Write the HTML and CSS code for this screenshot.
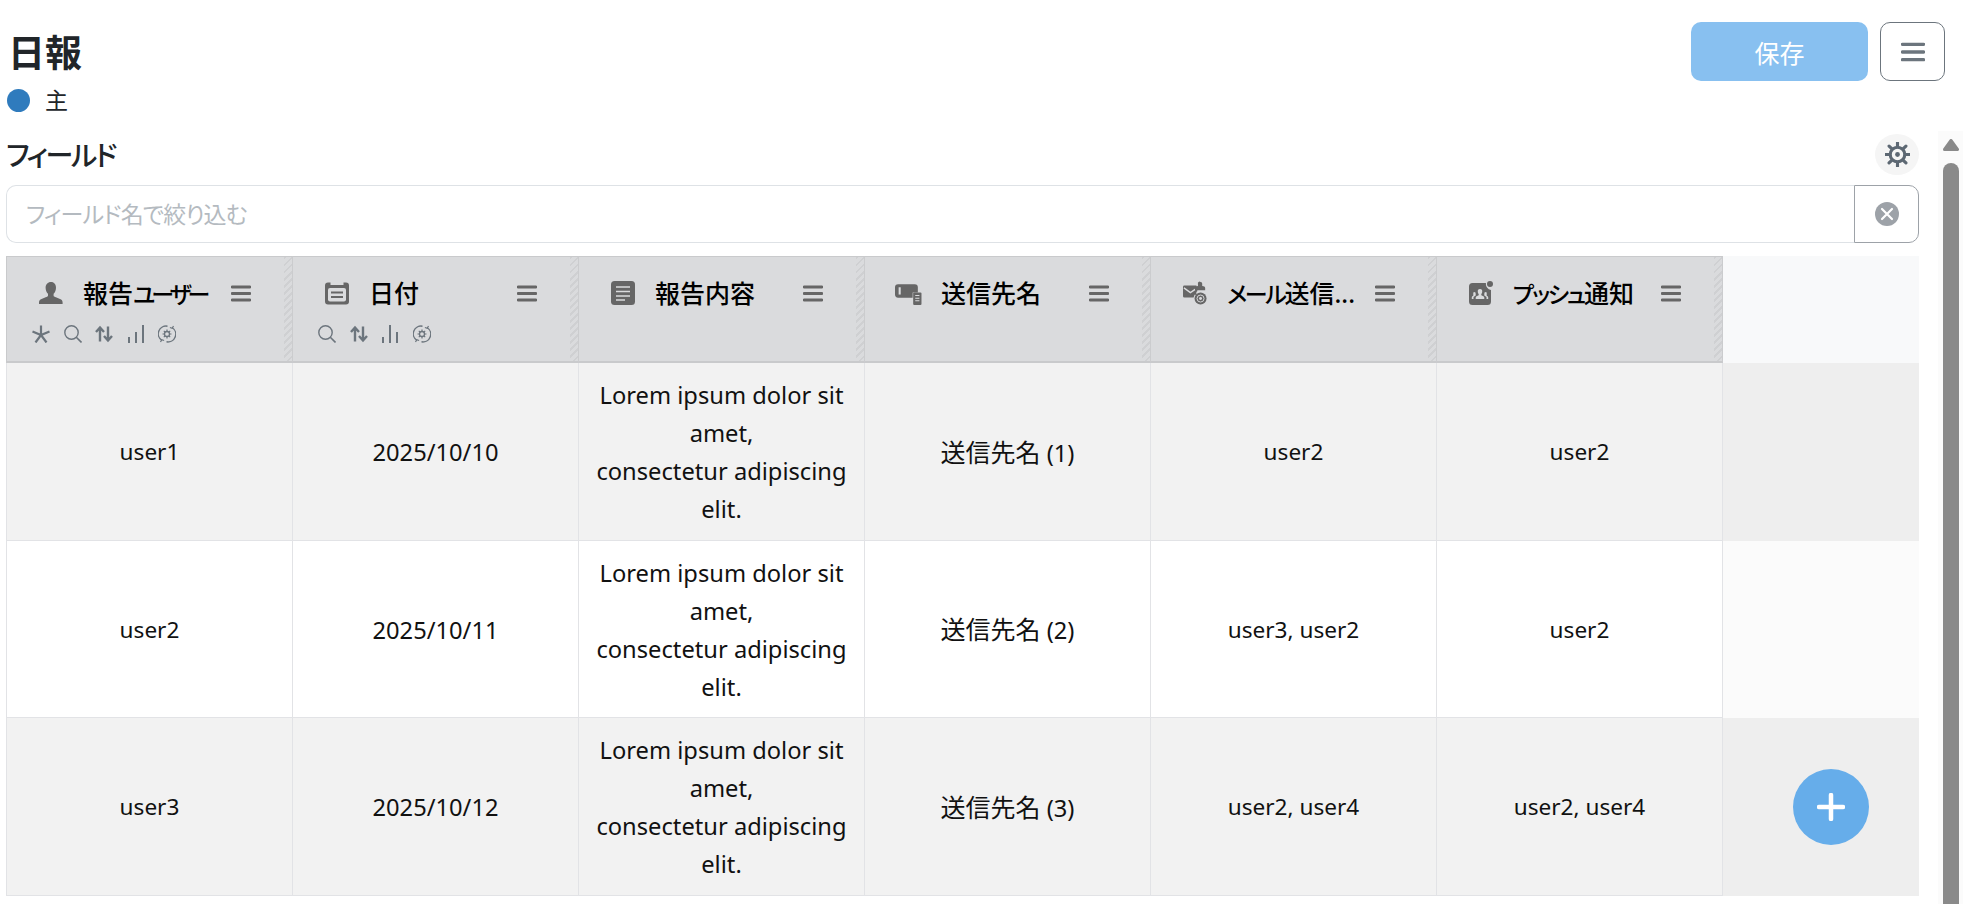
FILE: index.html
```html
<!DOCTYPE html>
<html lang="ja">
<head>
<meta charset="utf-8">
<title>日報</title>
<link rel="stylesheet" href="styles.css">
</head>
<body>
<svg class="defs" width="0" height="0" aria-hidden="true">
  <symbol id="i-menu" viewBox="0 0 20 17"><path d="M1 2h18M1 8.500h18M1 15h18" fill="none" stroke="currentColor" stroke-width="2.800" stroke-linecap="round"/></symbol>
  <symbol id="i-user" viewBox="0 0 24 24"><path d="M12 1c3.300 0 5 2.500 5 5.700 0 2.500-1 4.800-2.400 6v2.100c0 1 4 2.100 7 3.500 1.300.6 2 1.700 2 3.200V23H0v-1.500c0-1.500.7-2.600 2-3.200 3-1.400 7-2.500 7-3.500v-2.100c-1.400-1.200-2.400-3.500-2.400-6C6.600 3.500 8.700 1 12 1z" fill="currentColor"/></symbol>
  <symbol id="i-cal" viewBox="0 0 24 24"><path d="M3 1.500h2.500v2.500h13V1.500H21a3 3 0 0 1 3 3v16a3 3 0 0 1-3 3H3a3 3 0 0 1-3-3v-16a3 3 0 0 1 3-3z" fill="currentColor"/><rect x="3" y="7" width="18" height="13.500" rx="2" fill="#dadbdd"/><path d="M6 11.500h12M6 16h12" stroke="currentColor" stroke-width="1.800"/></symbol>
  <symbol id="i-doc" viewBox="0 0 24 24"><rect width="24" height="24" rx="3.500" fill="currentColor"/><path d="M5 6h14M5 10.500h14M5 15h14M5 19h9" stroke="#dadbdd" stroke-width="1.500"/></symbol>
  <symbol id="i-ticket" viewBox="0 0 26 24"><path d="M3 3h16a3 3 0 0 1 3 3v5h-5v5H3a3 3 0 0 1-3-3V6a3 3 0 0 1 3-3z" fill="currentColor"/><rect x="3.500" y="6" width="2" height="7" fill="#dadbdd"/><rect x="17.500" y="11" width="8" height="12" rx="1" fill="currentColor"/><path d="M19.500 14h4M19.500 16.500h4M19.500 19h4" stroke="#dadbdd"/></symbol>
  <symbol id="i-mail" viewBox="0 0 26 26"><path d="M1.500 5h13l1 3v3l-1 1v3h-2l-1 3H1.500A1.500 1.500 0 0 1 0 16.500v-10A1.500 1.500 0 0 1 1.500 5z" fill="currentColor"/><path d="M1 7.500l7 5 6-4" fill="none" stroke="#dadbdd" stroke-width="1.500"/><path d="M19 1a1.800 1.800 0 0 1 1.800 2v2.500c2 .3 3.200.8 3.200 2V10H13V7.500c0-1.200 1.400-1.700 3.200-2V3A1.800 1.800 0 0 1 19 1z" fill="currentColor"/><circle cx="19" cy="19" r="6.500" fill="currentColor"/><circle cx="19" cy="19" r="3.800" fill="none" stroke="#dadbdd" stroke-width="1"/><circle cx="19" cy="19" r="1.600" fill="#dadbdd"/></symbol>
  <symbol id="i-push" viewBox="0 0 24 24"><path d="M3.500 2H17a6 6 0 0 0 5 7v11.500a3.500 3.500 0 0 1-3.500 3.500h-15A3.500 3.500 0 0 1 0 20.500v-15A3.500 3.500 0 0 1 3.500 2z" fill="currentColor"/><circle cx="21" cy="3" r="3" fill="currentColor"/><path d="M11 8a2.200 2.200 0 0 1 2.200 2.500c0 1-.3 2-.9 2.500v1.200c1.500.6 3 1 3 2.300V18H6.700v-1.500c0-1.300 1.500-1.700 3-2.300V13c-.6-.5-.9-1.500-.9-2.500A2.200 2.200 0 0 1 11 8z" fill="#dadbdd"/><path d="M5 11a1.700 1.700 0 0 1 1.700 2v1.400L4.500 16V18H2.800v-1.700c0-1 1-1.200 1.500-1.600V13A1.700 1.700 0 0 1 5 11zM17 11a1.700 1.700 0 0 0-1.700 2v1.400l2.200 1.600V18h1.700v-1.700c0-1-1-1.200-1.500-1.600V13A1.700 1.700 0 0 0 17 11z" fill="#dadbdd"/></symbol>
  <symbol id="i-star" viewBox="0 0 18 18"><path d="M9 .5v9.500M.5 6.500L9 10l8.500-3.500M9 10l-5.500 7.500M9 10l5.500 7.500" fill="none" stroke="currentColor" stroke-width="2.200"/></symbol>
  <symbol id="i-search" viewBox="0 0 18 18"><circle cx="7.500" cy="7.500" r="6.700" fill="none" stroke="currentColor" stroke-width="1.400"/><path d="M12.300 12.300l5.200 5.200" stroke="currentColor" stroke-width="1.600"/></symbol>
  <symbol id="i-sort" viewBox="0 0 18 18"><path d="M5 16.500V3M1 7l4-4.500L9 7M13 1.500V15M9 11l4 4.500 4-4.500" fill="none" stroke="currentColor" stroke-width="2.400"/></symbol>
  <symbol id="i-bars" viewBox="0 0 18 18"><path d="M2 18v-6M9 18V0M16 18V7" stroke="currentColor" stroke-width="2"/></symbol>
  <symbol id="i-bars-up" viewBox="0 0 18 18"><path d="M2 18v-6M9 18V7M16 18V0" stroke="currentColor" stroke-width="2"/></symbol>
  <symbol id="i-sync" viewBox="0 0 18 18"><path d="M4 15.500A7.800 7.800 0 0 1 9.500 1.200M14 2.500a7.800 7.800 0 0 1-5.500 14.300" fill="none" stroke="currentColor" stroke-width="1.400"/><path d="M15.500 1l-1.300 2.300-2.300-.8M2.500 17l1.300-2.300 2.300.8" fill="none" stroke="currentColor" stroke-width="1.200"/><circle cx="9" cy="9" r="2.500" fill="none" stroke="currentColor" stroke-width="1.300"/><path d="M9 4.500v2M9 11.500v2M4.500 9h2M11.500 9h2M5.800 5.800l1.400 1.400M10.800 10.800l1.400 1.400M5.800 12.200l1.400-1.400M10.800 7.200l1.400-1.400" stroke="currentColor" stroke-width="1.200"/></symbol>
  <symbol id="i-gear" viewBox="0 0 24 24"><circle cx="12" cy="12" r="7" fill="none" stroke="currentColor" stroke-width="3"/><circle cx="12" cy="12" r="2.300" fill="currentColor"/><path d="M12 .5v4M12 19.500v4M.5 12h4M19.500 12h4M3.900 3.900l2.800 2.800M17.300 17.300l2.800 2.800M3.900 20.100l2.800-2.800M17.300 6.700l2.800-2.800" stroke="currentColor" stroke-width="3" stroke-linecap="round"/></symbol>
</svg>

<header class="top">
  <div class="title-block">
    <h1 class="title">日報</h1>
    <div class="legend"><span class="dot"></span><span class="legend-text">主</span></div>
  </div>
  <div class="actions">
    <button class="btn-save" type="button">保存</button>
    <button class="btn-menu" type="button" aria-label="メニュー"><svg class="btn-menu-icon"><use href="#i-menu"/></svg></button>
  </div>
</header>

<div class="work">
  <main class="content">
    <div class="field-head">
      <h2 class="field-title">フィールド</h2>
      <button class="gear" type="button" aria-label="設定"><svg class="gear-icon"><use href="#i-gear"/></svg></button>
    </div>
    <div class="filter">
      <input class="filter-input" type="text" placeholder="フィールド名で絞り込む">
      <button class="filter-clear" type="button" aria-label="クリア">
        <svg class="clear-icon" viewBox="0 0 24 24"><circle cx="12" cy="12" r="12" fill="#9da2a8"/><path d="M7 7l10 10M17 7L7 17" stroke="#fff" stroke-width="2.200" stroke-linecap="round"/></svg>
      </button>
    </div>

    <div class="grid">
      <div class="th">
        <div class="th-main"><svg class="th-icon"><use href="#i-user"/></svg><span class="th-label">報告<span class="kana-tight">ユーザー</span></span><svg class="th-menu"><use href="#i-menu"/></svg></div>
        <div class="th-tools"><svg class="tool"><use href="#i-star"/></svg><svg class="tool"><use href="#i-search"/></svg><svg class="tool"><use href="#i-sort"/></svg><svg class="tool"><use href="#i-bars-up"/></svg><svg class="tool"><use href="#i-sync"/></svg></div>
      </div>
      <div class="th">
        <div class="th-main"><svg class="th-icon"><use href="#i-cal"/></svg><span class="th-label">日付</span><svg class="th-menu"><use href="#i-menu"/></svg></div>
        <div class="th-tools"><svg class="tool"><use href="#i-search"/></svg><svg class="tool"><use href="#i-sort"/></svg><svg class="tool"><use href="#i-bars"/></svg><svg class="tool"><use href="#i-sync"/></svg></div>
      </div>
      <div class="th"><div class="th-main"><svg class="th-icon"><use href="#i-doc"/></svg><span class="th-label">報告内容</span><svg class="th-menu"><use href="#i-menu"/></svg></div></div>
      <div class="th"><div class="th-main"><svg class="th-icon th-icon-wide"><use href="#i-ticket"/></svg><span class="th-label">送信先名</span><svg class="th-menu"><use href="#i-menu"/></svg></div></div>
      <div class="th"><div class="th-main"><svg class="th-icon"><use href="#i-mail"/></svg><span class="th-label"><span class="kana">メール</span>送信...</span><svg class="th-menu"><use href="#i-menu"/></svg></div></div>
      <div class="th"><div class="th-main"><svg class="th-icon"><use href="#i-push"/></svg><span class="th-label"><span class="kana">プッシュ</span>通知</span><svg class="th-menu"><use href="#i-menu"/></svg></div></div>
      <div class="th-extra"></div>

      <div class="td odd"><span class="latin">user1</span></div>
      <div class="td odd">2025/10/10</div>
      <div class="td odd"><span>Lorem ipsum dolor sit amet,<br>consectetur adipiscing elit.</span></div>
      <div class="td odd"><span><span class="cjk">送信先名</span> (1)</span></div>
      <div class="td odd"><span class="latin">user2</span></div>
      <div class="td odd"><span class="latin">user2</span></div>
      <div class="extra odd-extra"></div>

      <div class="td"><span class="latin">user2</span></div>
      <div class="td">2025/10/11</div>
      <div class="td"><span>Lorem ipsum dolor sit amet,<br>consectetur adipiscing elit.</span></div>
      <div class="td"><span><span class="cjk">送信先名</span> (2)</span></div>
      <div class="td"><span class="latin">user3, user2</span></div>
      <div class="td"><span class="latin">user2</span></div>
      <div class="extra"></div>

      <div class="td odd"><span class="latin">user3</span></div>
      <div class="td odd">2025/10/12</div>
      <div class="td odd"><span>Lorem ipsum dolor sit amet,<br>consectetur adipiscing elit.</span></div>
      <div class="td odd"><span><span class="cjk">送信先名</span> (3)</span></div>
      <div class="td odd"><span class="latin">user2, user4</span></div>
      <div class="td odd"><span class="latin">user2, user4</span></div>
      <div class="extra odd-extra">
        <button class="fab" type="button" aria-label="追加"><svg class="fab-icon" viewBox="0 0 28 28"><path d="M14 2v24M2 14h24" stroke="#fff" stroke-width="4.500" stroke-linecap="round"/></svg></button>
      </div>
    </div>
  </main>

  <div class="scrollbar">
    <svg class="scroll-up" viewBox="0 0 16 12"><path d="M8 1.500L14.500 10.500H1.500z" fill="#8a8a8a" stroke="#8a8a8a" stroke-width="3" stroke-linejoin="round"/></svg>
    <span class="scroll-thumb"></span>
  </div>
</div>
</body>
</html>
```
FILE: styles.css
```css
* { box-sizing: border-box; }
html, body { height: 100%; }
body {
  margin: 0;
  overflow: hidden;
  background: #fff;
  color: #212529;
  font-family: "Noto Sans", "Noto Sans CJK JP", sans-serif;
  font-size: 23.7px;
  font-feature-settings: "palt";
}
.defs { position: absolute; }
button { font: inherit; padding: 0; cursor: pointer; }

.top {
  display: flex;
  justify-content: space-between;
  align-items: flex-start;
  height: 131px;
  padding: 22px 25px 0 8px;
}
.title { margin: 4px 0 0; font-size: 37px; line-height: 54px; font-weight: 700; color: #212529; }
.legend { display: flex; align-items: center; gap: 15px; margin: 4px 0 0 -1px; height: 32px; }
.legend-text { font-size: 23px; line-height: 32px; }
.dot { width: 23px; height: 23px; border-radius: 50%; background: #2f7bbd; }
.actions { display: flex; gap: 12px; }
.btn-save { width: 177px; height: 59px; border: 0; border-radius: 10px; background: #88c0f0; color: #fff; font-size: 25px; }
.btn-menu { width: 65px; height: 59px; border: 1px solid #6c757d; border-radius: 10px; background: #fff; color: #6c757d; display: flex; align-items: center; justify-content: center; }
.btn-menu-icon { width: 24px; height: 20px; }

.work { display: flex; padding-left: 6px; }
.content { width: 1913px; }
.field-head { display: flex; justify-content: space-between; align-items: center; height: 54px; padding: 3px 0 10px; }
.field-title { margin: 0; font-size: 28px; line-height: 40px; letter-spacing: -2.300px; font-weight: 500; color: #212529; }
.gear { width: 44px; height: 41px; border: 0; border-radius: 50%; background: #f5f5f5; color: #5d6873; display: flex; align-items: center; justify-content: center; }
.gear-icon { width: 25px; height: 25px; }

.filter { display: flex; height: 58px; }
.filter-input { flex: 1; min-width: 0; border: 1px solid #dee2e6; border-right: 0; border-radius: 10px 0 0 10px; padding: 0 19px; font: inherit; font-size: 23px; letter-spacing: -0.850px; color: #212529; outline: 0; }
.filter-input::placeholder { color: #b4bac0; opacity: 1; }
.filter-clear { width: 65px; border: 1px solid #9da2a8; border-radius: 0 10px 10px 0; background: #fff; display: flex; align-items: center; justify-content: center; }
.clear-icon { width: 24px; height: 24px; }

.grid {
  display: grid;
  grid-template-columns: 287px repeat(5, 286px) 196px;
  grid-template-rows: 107px 178px 177px 178px;
  margin-top: 13px;
}
.th {
  padding: 20px 0 0;
  background-color: #dadbdd;
  background-image: repeating-linear-gradient(135deg, #cfd0d2 0 2px, transparent 2px 5px);
  background-size: 8px 100%;
  background-position: right top;
  background-repeat: no-repeat;
  border-top: 1px solid #c9cacc;
  border-bottom: 2px solid #c9cacc;
  border-right: 1px solid #cbccce;
}
.th:first-child { border-left: 1px solid #c9cacc; }
.th-main { display: flex; align-items: center; height: 32px; padding-left: 32px; }
.th-icon { flex: none; width: 24px; height: 24px; color: #666; }
.th-icon-wide { width: 27px; height: 25px; margin: 0 -1px 0 -2px; }
.th-label { flex: none; width: 128px; margin-left: 20px; font-size: 25px; font-weight: 500; color: #000; line-height: 32px; white-space: nowrap; }
.kana { font-size: 23px; letter-spacing: -2.250px; }
.kana-tight { font-size: 23px; letter-spacing: -4px; }
.th-menu { flex: none; width: 20px; height: 17px; margin-left: 20px; color: #666; }
.th-tools { display: flex; gap: 13.500px; margin-top: 16px; padding-left: 25px; color: #6c757d; }
.tool { flex: none; width: 18px; height: 18px; }
.th-extra { background: #f8f9fa; }

.td {
  display: flex;
  align-items: center;
  justify-content: center;
  padding: 1px 12px 0;
  text-align: center;
  line-height: 38px;
  background: #fff;
  color: #111;
  border-right: 1px solid #e2e3e6;
  border-bottom: 1px solid #e2e3e6;
}
.td:nth-child(7n+1) { border-left: 1px solid #e2e3e6; }
.cjk { font-size: 25px; }
.latin { font-size: 22.600px; }
.td.odd { background: #f2f2f2; }
.extra { background: #fbfbfb; display: flex; align-items: center; justify-content: center; padding-left: 20px; }
.odd-extra { background: #eee; }
.fab { width: 76px; height: 76px; border: 0; border-radius: 50%; background: #66adea; display: flex; align-items: center; justify-content: center; }
.fab-icon { width: 28px; height: 28px; }

.scrollbar { margin-left: 19px; width: 25px; height: 773px; background: #fbfbfb; padding: 8px 5px 0; display: flex; flex-direction: column; gap: 12px; }
.scroll-up { display: block; flex: none; width: 16px; height: 12px; }
.scroll-thumb { display: block; flex: 1; width: 16px; border-radius: 8px 8px 0 0; background: #8a8a8a; }
```
